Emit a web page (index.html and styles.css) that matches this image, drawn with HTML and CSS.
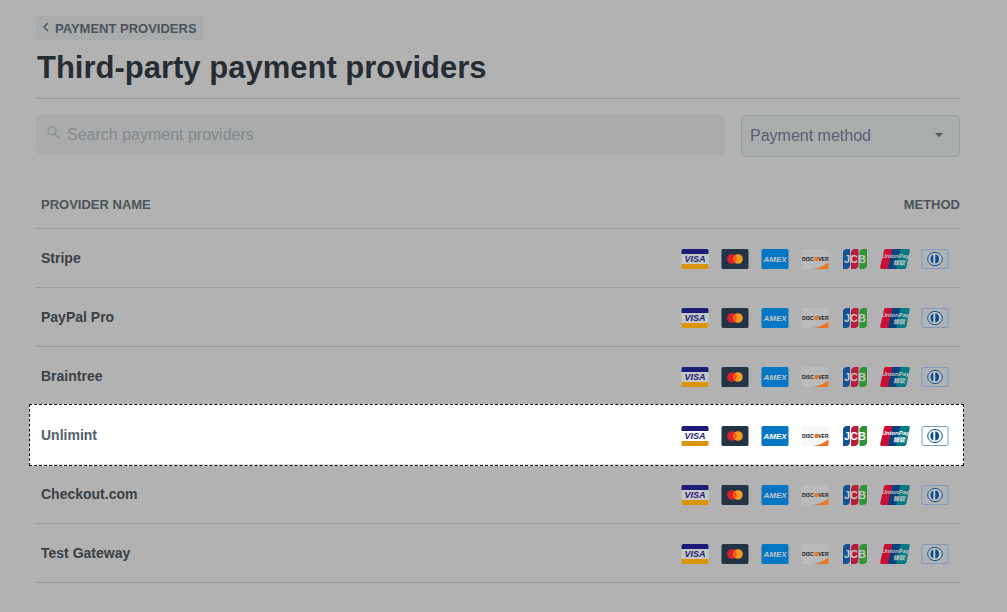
FILE: index.html
```html
<!DOCTYPE html>
<html lang="en">
<head>
<meta charset="utf-8">
<meta name="viewport" content="width=device-width, initial-scale=1">
<title>Third-party payment providers</title>
<link rel="stylesheet" href="styles.css">
</head>
<body>
<template id="card-icons">
  <svg class="card" viewBox="0 0 30 20" role="img" aria-label="Visa">
    <rect class="paper" x="1.500" width="27" height="20" rx="1.500"/>
    <path class="visa-blue" d="M3 0h24a1.500 1.500 0 0 1 1.500 1.500V5h-27V1.500A1.500 1.500 0 0 1 3 0z"/>
    <path class="visa-gold" d="M1.500 15h27v3.500A1.500 1.500 0 0 1 27 20H3a1.500 1.500 0 0 1-1.500-1.500z"/>
    <text class="visa-blue mark" x="15" y="13" font-size="9" font-style="italic" text-anchor="middle">VISA</text>
  </svg>
  <svg class="card" viewBox="0 0 30 20" role="img" aria-label="Mastercard">
    <rect class="mc-navy" x="1.500" width="27" height="20" rx="1.500"/>
    <circle class="mc-red" cx="12" cy="10" r="4.800"/>
    <circle class="mc-gold" cx="18" cy="10" r="4.800"/>
    <path class="mc-orange" d="M15 6.250a4.800 4.800 0 0 1 0 7.500a4.800 4.800 0 0 1 0-7.500z"/>
  </svg>
  <svg class="card" viewBox="0 0 30 20" role="img" aria-label="American Express">
    <rect class="amex-blue" x="1.500" width="27" height="20" rx="1.500"/>
    <text class="paper mark" x="15" y="13" font-size="8" font-style="italic" text-anchor="middle">AMEX</text>
  </svg>
  <svg class="card" viewBox="0 0 30 20" role="img" aria-label="Discover">
    <rect class="disc-paper" x="1.500" width="27" height="20" rx="1.500"/>
    <path class="disc-orange" d="M28.500 13.500v5A1.500 1.500 0 0 1 27 20H13c6-1 11-3 15.500-6.500z"/>
    <text class="disc-ink mark" x="2" y="12" font-size="5">DISC</text>
    <circle class="disc-orange" cx="16.500" cy="10" r="2.200"/>
    <text class="disc-ink mark" x="28.500" y="12" font-size="5" text-anchor="end">VER</text>
  </svg>
  <svg class="card" viewBox="0 0 30 20" role="img" aria-label="JCB">
    <path class="jcb-blue" d="M6.500 0H10v16a4 4 0 0 1-3.500 4H3V4a4 4 0 0 1 3.500-4z"/>
    <path class="jcb-red" d="M14.500 0H18.500v16a4 4 0 0 1-3.500 4h-4V4a4 4 0 0 1 3.500-4z"/>
    <path class="jcb-green" d="M23 0h4v16a4 4 0 0 1-3.500 4h-4V4a4 4 0 0 1 3.500-4z"/>
    <text class="paper mark" x="15" y="13.500" font-size="11" text-anchor="middle">JCB</text>
  </svg>
  <svg class="card" viewBox="0 0 30 20" role="img" aria-label="UnionPay">
    <path class="up-red" d="M5.500 0H15l-4 20H1.500Q0 20 .200 18L4 1.500Q4.300 0 5.500 0z"/>
    <path class="up-blue" d="M13 0h9l-4 20H9.500Q8 20 8.300 18L12 1.500Q12.300 0 13 0z"/>
    <path class="up-teal" d="M21.500 0h7q1.500 0 1.300 1.500L26.500 18q-.500 2-2 2H17Q16 20 16.500 18L20 1.500Q20.300 0 21.500 0z"/>
    <text class="paper mark" x="15.500" y="9" font-size="6" font-style="italic" text-anchor="middle">UnionPay</text>
    <text class="paper mark" x="19" y="16" font-size="6" font-style="italic" text-anchor="middle">银联</text>
  </svg>
  <svg class="card" viewBox="0 0 30 20" role="img" aria-label="Diners Club">
    <rect class="diners-frame" x="2" y=".500" width="26" height="19" rx="1.500"/>
    <ellipse class="diners-ring" cx="15" cy="10" rx="7.300" ry="6.600"/>
    <path class="diners-fill" d="M13.300 5.600v8.800a4.800 4.800 0 0 1 0-8.800zM15.300 5.300a4.800 4.800 0 0 1 0 9.400z"/>
  </svg>
</template>

<main class="page">
  <a class="back" href="#">
    <svg class="back-icon" viewBox="0 0 8 10" aria-hidden="true"><path d="M6 1L2 5l4 4"/></svg>
    PAYMENT PROVIDERS
  </a>
  <h1 class="title">Third-party payment providers</h1>

  <form class="filters">
    <label class="search">
      <svg class="search-icon" viewBox="0 0 14 14" aria-hidden="true"><circle cx="5" cy="5" r="4"/><path d="M8 8l5 5"/></svg>
      <input class="search-input" type="search" placeholder="Search payment providers" aria-label="Search payment providers">
    </label>
    <div class="method">
      <select class="method-select" aria-label="Payment method"><option>Payment method</option></select>
      <svg class="method-arrow" viewBox="0 0 8 4" aria-hidden="true"><path d="M0 0h8L4 4z"/></svg>
    </div>
  </form>

  <table class="providers">
    <thead>
      <tr><th class="name-head" scope="col">PROVIDER NAME</th><th class="method-head" scope="col">METHOD</th></tr>
    </thead>
    <tbody>
      <tr class="row"><td class="name">Stripe</td><td class="methods"><div class="cards"></div></td></tr>
      <tr class="row"><td class="name">PayPal Pro</td><td class="methods"><div class="cards"></div></td></tr>
      <tr class="row"><td class="name">Braintree</td><td class="methods"><div class="cards"></div></td></tr>
      <tr class="row row-active"><td class="name">Unlimint</td><td class="methods"><div class="cards"></div></td></tr>
      <tr class="row"><td class="name">Checkout.com</td><td class="methods"><div class="cards"></div></td></tr>
      <tr class="row"><td class="name">Test Gateway</td><td class="methods"><div class="cards"></div></td></tr>
    </tbody>
  </table>
</main>
<script src="cards.js"></script>
</body>
</html>
```
FILE: cards.js
```js
// Every provider accepts the same set of cards.
const icons = document.getElementById("card-icons");
document.querySelectorAll(".cards").forEach((list) => {
  list.append(icons.content.cloneNode(true));
});
```
FILE: styles.css
```css
* { box-sizing: border-box; }

body {
  margin: 0;
  background: #b2b2b2;
  color: #394045;
  font-family: "Liberation Sans", Arial, "Noto Sans CJK SC", sans-serif;
  --paper: #c6c6c6;
  --disc-paper: #bababa;
  --line: #9c9ca4;
}

.page { padding: 16px 47px 24px 36px; }

.back {
  display: inline-flex;
  align-items: center;
  gap: 5px;
  height: 24px;
  padding: 0 6px;
  border-radius: 3px;
  background: #a9abac;
  color: #4c5559;
  font-size: 13px;
  font-weight: bold;
  text-decoration: none;
}
.back-icon { width: 8px; height: 10px; margin-bottom: 2px; fill: none; stroke: #4c5559; stroke-width: 1.500; }

.title {
  margin: 8px 0 0;
  padding: 0 1px 10px;
  border-bottom: 1px solid #999b9c;
  color: #262d32;
  font-size: 31px;
  line-height: 40px;
}

.filters { display: flex; align-items: flex-start; gap: 16px; padding-top: 16px; }

.search {
  display: flex;
  flex: 1;
  align-items: center;
  gap: 6px;
  height: 40px;
  padding: 0 11px;
  border-radius: 6px;
  background: #a9abac;
}
.search-icon { width: 14px; height: 14px; margin-bottom: 4px; fill: none; stroke: #919496; stroke-width: 1.500; }
.search-input {
  flex: 1;
  min-width: 0;
  padding: 0;
  border: 0;
  outline: 0;
  background: transparent;
  color: #4c5559;
  font: 16px "Liberation Sans", Arial, sans-serif;
}
.search-input::placeholder { color: #85888a; opacity: 1; }

.method { display: grid; width: 219px; align-items: center; }
.method-select, .method-arrow { grid-area: 1 / 1; }
.method-select {
  width: 100%;
  height: 42px;
  padding: 0 8px 2px;
  border: 1px solid #969b9a;
  border-radius: 6px;
  appearance: none;
  background: #a9adac;
  color: #5b5e70;
  font: 16px "Liberation Sans", Arial, sans-serif;
}
.method-arrow { justify-self: end; width: 8px; height: 4px; margin: 0 17px 2px 0; fill: #4f5261; pointer-events: none; }

.providers { width: 100%; margin-top: 24px; border-collapse: separate; border-spacing: 0; }
.providers th {
  height: 48px;
  padding: 0;
  border-bottom: 1px solid var(--line);
  color: #4c5559;
  font-size: 13px;
  text-align: left;
}
.providers .name-head { padding-left: 5px; }
.providers .method-head { text-align: right; }

.row td { height: 59px; padding: 0; border-bottom: 1px solid var(--line); }
.row .name { padding-left: 5px; font-size: 14px; font-weight: bold; }
.row .methods { padding: 2px 10px 0 0; }
.cards { display: flex; justify-content: flex-end; gap: 10px; }
.card { display: block; width: 30px; height: 20px; }

.row-active {
  position: relative;
  z-index: 0;
  color: #51606a;
  --paper: #ffffff;
  --disc-paper: #f7f7f7;
  --line: #dfdfec;
}
.row-active .name::before {
  content: "";
  position: absolute;
  inset: -2px -4px -1px -7px;
  z-index: -1;
  border: 1px dashed #000000;
  background: #ffffff;
}

.mark { font-family: "Liberation Sans", Arial, "Noto Sans CJK SC", sans-serif; font-weight: bold; }
.paper { fill: var(--paper); }
.visa-blue { fill: #1c1b78; }
.visa-gold { fill: #d99408; }
.mc-navy { fill: #243447; }
.mc-red { fill: #dc2027; }
.mc-gold { fill: #f39a22; }
.mc-orange { fill: #f05a1f; }
.amex-blue { fill: #0476c4; }
.disc-paper { fill: var(--disc-paper); }
.disc-ink { fill: #222222; }
.disc-orange { fill: #ea7623; }
.jcb-blue { fill: #155196; }
.jcb-red { fill: #b61e3e; }
.jcb-green { fill: #2d9437; }
.up-red { fill: #c90f35; }
.up-blue { fill: #07427d; }
.up-teal { fill: #047b82; }
.diners-frame { fill: none; stroke: #7c9cc6; stroke-width: 1; }
.diners-ring { fill: var(--paper); stroke: #0c4d8c; stroke-width: 1; }
.diners-fill { fill: #0c4d8c; }
```
